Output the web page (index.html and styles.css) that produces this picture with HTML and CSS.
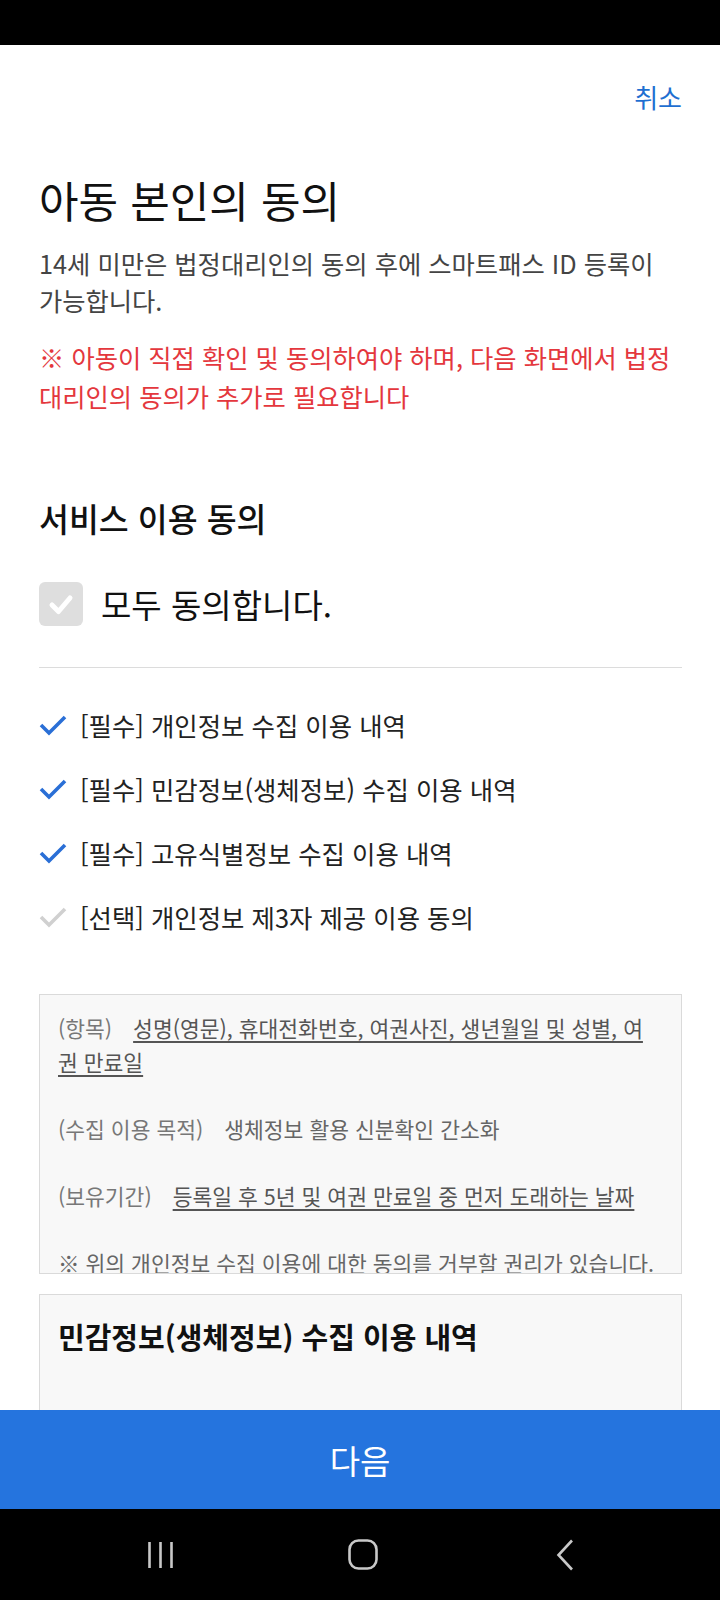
FILE: index.html
```html
<!DOCTYPE html>
<html lang="ko">
<head>
<meta charset="utf-8">
<title>아동 본인의 동의</title>
<link rel="stylesheet" href="styles.css">
</head>
<body>
<div class="phone">
  <div class="status-bar"></div>
  <main class="scroll">
    <header class="top-bar"><span class="cancel">취소</span></header>
    <section class="intro">
      <h1 class="title">아동 본인의 동의</h1>
      <p class="desc">14세 미만은 법정대리인의 동의 후에 스마트패스 ID 등록이 가능합니다.</p>
      <p class="warn">※ 아동이 직접 확인 및 동의하여야 하며, 다음 화면에서 법정대리인의 동의가 추가로 필요합니다</p>
    </section>
    <section class="agree">
      <h2 class="section-title">서비스 이용 동의</h2>
      <div class="all-row">
        <span class="checkbox"><svg viewBox="0 0 44 44" width="44" height="44"><polyline points="13,23 19.5,29.5 31,16" fill="none" stroke="#fff" stroke-width="5" stroke-linecap="round" stroke-linejoin="round"/></svg></span>
        <span class="all-text">모두 동의합니다.</span>
      </div>
      <hr class="divider">
      <ul class="terms">
        <li class="term"><svg class="tick on" viewBox="0 0 28 22" width="28" height="22"><polyline points="2,11 10,19 26,3" fill="none" stroke-width="3.6" stroke-linejoin="miter"/></svg><span>[필수] 개인정보 수집 이용 내역</span></li>
        <li class="term"><svg class="tick on" viewBox="0 0 28 22" width="28" height="22"><polyline points="2,11 10,19 26,3" fill="none" stroke-width="3.6" stroke-linejoin="miter"/></svg><span>[필수] 민감정보(생체정보) 수집 이용 내역</span></li>
        <li class="term"><svg class="tick on" viewBox="0 0 28 22" width="28" height="22"><polyline points="2,11 10,19 26,3" fill="none" stroke-width="3.6" stroke-linejoin="miter"/></svg><span>[필수] 고유식별정보 수집 이용 내역</span></li>
        <li class="term"><svg class="tick off" viewBox="0 0 28 22" width="28" height="22"><polyline points="2,11 10,19 26,3" fill="none" stroke-width="3.6" stroke-linejoin="miter"/></svg><span>[선택] 개인정보 제3자 제공 이용 동의</span></li>
      </ul>
      <div class="detail-box">
        <p class="detail-line"><span class="label">(항목)</span><span class="value">성명(영문), 휴대전화번호, 여권사진, 생년월일 및 성별, 여권 만료일</span></p>
        <p class="detail-line"><span class="label">(수집 이용 목적)</span>생체정보 활용 신분확인 간소화</p>
        <p class="detail-line"><span class="label">(보유기간)</span><span class="value">등록일 후 5년 및 여권 만료일 중 먼저 도래하는 날짜</span></p>
        <p class="detail-line">※ 위의 개인정보 수집 이용에 대한 동의를 거부할 권리가 있습니다.</p>
      </div>
      <div class="detail-box detail-box--open">
        <h3 class="box-title">민감정보(생체정보) 수집 이용 내역</h3>
        <p class="detail-line"><span class="label">(항목)</span><span class="value">얼굴 이미지(생체정보), 얼굴 특징정보</span></p>
      </div>
    </section>
  </main>
  <button class="next" type="button">다음</button>
  <nav class="sys-nav">
    <span class="nav-slot"><svg viewBox="0 0 28 28" width="28" height="28"><path d="M2.5 1v26M13.5 1v26M24.5 1v26" stroke="#c8c8c8" stroke-width="2.6" fill="none"/></svg></span>
    <span class="nav-slot"><svg viewBox="0 0 31 31" width="31" height="31"><rect x="1.5" y="1.5" width="27" height="28" rx="9" ry="9" fill="none" stroke="#c8c8c8" stroke-width="2.6"/></svg></span>
    <span class="nav-slot"><svg viewBox="0 0 18 32" width="18" height="32"><polyline points="16,1.5 2.5,16 16,30.5" fill="none" stroke="#c8c8c8" stroke-width="2.6"/></svg></span>
  </nav>
</div>
</body>
</html>
```

FILE: styles.css
```css
* { box-sizing: border-box; }
html, body { margin: 0; padding: 0; }
body {
  width: 720px;
  height: 1600px;
  overflow: hidden;
  font-family: "Noto Sans CJK KR", "Noto Sans", sans-serif;
  background: #000;
}
.phone {
  width: 720px;
  height: 1600px;
  display: flex;
  flex-direction: column;
}
.status-bar {
  height: 45px;
  flex: none;
  background: #000;
}
.scroll {
  flex: 1;
  min-height: 0;
  overflow: hidden;
  background: #fff;
  padding: 0 38px 0 39px;
}
.top-bar {
  display: flex;
  justify-content: flex-end;
  padding-top: 35px;
}
.cancel {
  font-size: 26px;
  line-height: 34px;
  color: #1f6fd1;
}
.title {
  margin: 57px 0 0;
  font-size: 43px;
  line-height: 56px;
  font-weight: 400;
  color: #111;
}
.desc {
  margin: 18px 0 0;
  font-size: 25.3px;
  line-height: 37px;
  color: #444;
}
.warn {
  margin: 19px 0 0;
  font-size: 25.3px;
  line-height: 39px;
  color: #e4373d;
}
.section-title {
  margin: 83px 0 0;
  font-size: 32.5px;
  line-height: 38px;
  font-weight: 500;
  color: #111;
}
.all-row {
  margin-top: 45px;
  display: flex;
  align-items: center;
  gap: 18px;
  height: 44px;
}
.checkbox {
  width: 44px;
  height: 44px;
  border-radius: 6px;
  background: #dedede;
  display: block;
  flex: none;
}
.checkbox svg { display: block; }
.all-text {
  font-size: 33px;
  line-height: 44px;
  color: #111;
}
.divider {
  margin: 41px 0 0;
  border: 0;
  height: 1px;
  background: #dcdcdc;
}
.terms {
  list-style: none;
  margin: 25px 0 0;
  padding: 0;
}
.term {
  height: 64px;
  display: flex;
  align-items: center;
  gap: 13px;
  font-size: 25.4px;
  color: #222;
}
.tick { flex: none; display: block; }
.tick.on polyline { stroke: #2a6fd6; }
.tick.off polyline { stroke: #d0d0d0; }
.detail-box {
  margin-top: 45px;
  height: 280px;
  overflow: hidden;
  background: #f8f8f8;
  border: 1px solid #dadada;
  padding: 16px 23px 0 18px;
}
.detail-box--open {
  margin-top: 20px;
  height: 400px;
  padding-top: 21px;
}
.detail-line {
  margin: 0 0 33px;
  font-size: 21.5px;
  line-height: 34px;
  color: #666;
}
.label {
  margin-right: 21px;
  color: #777;
}
.value {
  color: #555;
  text-decoration: underline;
  text-decoration-thickness: 2px;
  text-underline-offset: 4px;
}
.box-title {
  margin: 0 0 52px;
  font-size: 29px;
  line-height: 40px;
  font-weight: 700;
  color: #111;
}
.next {
  flex: none;
  height: 99px;
  border: 0;
  margin: 0;
  background: #2574de;
  color: #fff;
  font-family: inherit;
  font-size: 33px;
}
.sys-nav {
  flex: none;
  height: 91px;
  background: #000;
  display: grid;
  grid-template-columns: repeat(3, 202px);
  padding-left: 60px;
  align-items: center;
}
.nav-slot {
  display: flex;
  justify-content: center;
  align-items: center;
}
.nav-slot svg { display: block; }
```
